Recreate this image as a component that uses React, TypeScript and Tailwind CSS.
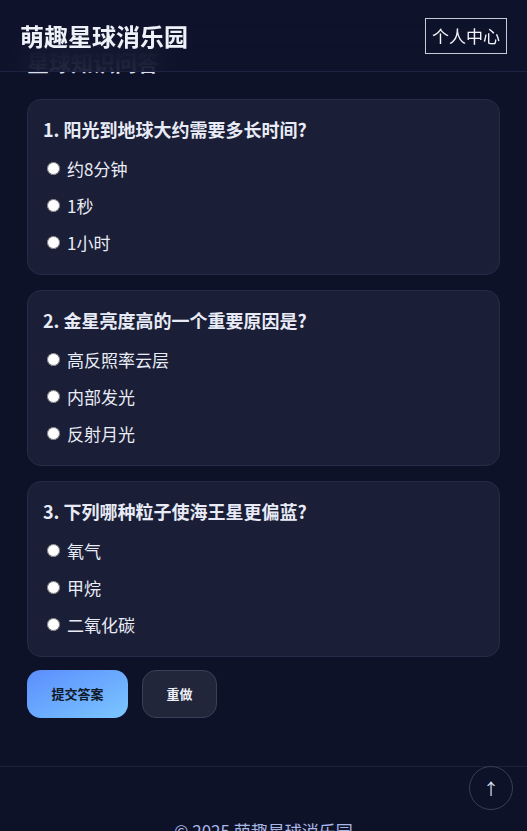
import { useState } from "react";

const questions = [
	{
		title: "1. 阳光到地球大约需要多长时间?",
		options: ["约8分钟", "1秒", "1小时"],
	},
	{
		title: "2. 金星亮度高的一个重要原因是?",
		options: ["高反照率云层", "内部发光", "反射月光"],
	},
	{
		title: "3. 下列哪种粒子使海王星更偏蓝?",
		options: ["氧气", "甲烷", "二氧化碳"],
	},
];

export default function App() {
	const [answers, setAnswers] = useState<Record<number, string>>({});

	return (
		<div
			className="min-h-screen bg-[#0e1229] text-white"
			style={{ fontFamily: '"Noto Sans CJK SC", "Noto Sans", sans-serif' }}
		>
			{/* Header */}
			<header className="sticky top-0 z-10 h-[72px] bg-[#0e132b]/85 backdrop-blur-lg border-b border-[#1d2340] flex items-center justify-between pl-5 pr-5">
				<h1 className="text-[24px] font-bold text-[#eef1f8]">萌趣星球消乐园</h1>
				<button className="h-[36px] px-[6px] border border-[#c7cbd6] text-[17px] text-[#f1f3f8] leading-none">
					个人中心
				</button>
			</header>

			{/* Main */}
			<main className="-mt-[25px] px-[27px] pb-12">
				<h2 className="text-[22px] leading-[28px] font-bold text-[#d9deec] mb-[24px]">
					星球知识问答
				</h2>

				<div className="flex flex-col gap-[15px]">
					{questions.map((q, qi) => (
						<div
							key={qi}
							className="rounded-[14px] border border-[#262b47] bg-[#1a1e37] px-[15px] pt-[15px] pb-[13px]"
						>
							<div className="text-[18px] leading-[28px] font-bold text-[#e8ebf5] mb-[7px]">
								{q.title}
							</div>
							<div className="flex flex-col">
								{q.options.map((opt) => (
									<label
										key={opt}
										className="h-[37px] flex items-center gap-[7px] pl-[4px] text-[17px] text-[#e9ecf4]"
									>
										<input
											type="radio"
											name={`q${qi}`}
											checked={answers[qi] === opt}
											onChange={() => setAnswers({ ...answers, [qi]: opt })}
											className="w-[13px] h-[13px] m-0"
										/>
										{opt}
									</label>
								))}
							</div>
						</div>
					))}
				</div>

				<div className="flex gap-[14px] mt-[13px]">
					<button className="h-[48px] w-[101px] rounded-[14px] bg-gradient-to-br from-[#5b8dfd] to-[#7cc6ff] text-[13px] font-bold text-[#111827]">
						提交答案
					</button>
					<button className="h-[48px] w-[75px] rounded-[14px] border border-[#3a3f58] bg-[#22263b] text-[13px] font-bold text-[#eef1f8]">
						重做
					</button>
				</div>
			</main>

			{/* Footer */}
			<footer className="border-t border-[#1c2138] pt-[51px] pb-6 text-center text-[17px] text-[#a9b7e6]">
				© 2025 萌趣星球消乐园
			</footer>

			<button className="fixed right-[14px] bottom-[21px] w-[44px] h-[44px] rounded-full border border-[#3a3f55] bg-[#0e1229] text-[#dfe4f2] text-[16px] flex items-center justify-center">
				↑
			</button>
		</div>
	);
}
